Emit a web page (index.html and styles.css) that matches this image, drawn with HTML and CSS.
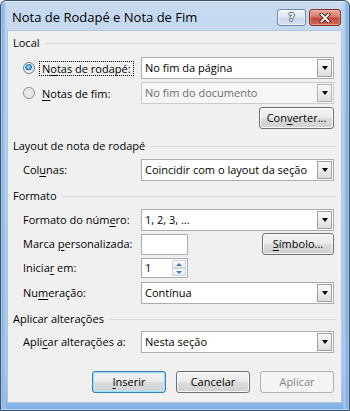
FILE: index.html
```html
<!DOCTYPE html>
<html lang="pt">
<head>
<meta charset="utf-8">
<title>Nota de Rodapé e Nota de Fim</title>
<link rel="stylesheet" href="styles.css">
</head>
<body>
<div class="window">
  <div class="titlebar">
    <span class="title">Nota de Rodapé e Nota de Fim</span>
    <div class="caption-buttons">
      <div class="cap-btn help"><span class="help-glyph">?</span></div>
      <div class="cap-btn close">
        <svg class="close-glyph" width="12" height="10" viewBox="0 0 12 10">
          <path d="M2.5 1.5 L9.5 8.5 M9.5 1.5 L2.5 8.5" stroke="#4a1f19" stroke-width="3.6" stroke-linecap="square" fill="none"/>
          <path d="M2.5 1.5 L9.5 8.5 M9.5 1.5 L2.5 8.5" stroke="#ffffff" stroke-width="1.9" stroke-linecap="square" fill="none"/>
        </svg>
      </div>
    </div>
  </div>
  <div class="client">
    <div class="group group-local">
      <div class="group-header"><span>Local</span><span class="rule"></span></div>
      <div class="row">
        <div class="radio-label"><span class="radio checked"></span><span class="radio-text focused">N<u>o</u>tas de rodapé:</span></div>
        <div class="combo"><span class="combo-text">No fim da página</span><span class="combo-btn"><span class="arrow"></span></span></div>
      </div>
      <div class="row">
        <div class="radio-label"><span class="radio"></span><span class="radio-text"><u>N</u>otas de fim:</span></div>
        <div class="combo disabled"><span class="combo-text">No fim do documento</span><span class="combo-btn"><span class="arrow"></span></span></div>
      </div>
      <div class="row-buttons">
        <div class="btn btn-convert">Con<u>v</u>erter...</div>
      </div>
    </div>

    <div class="group group-layout">
      <div class="group-header"><span>Layout de nota de rodapé</span><span class="rule"></span></div>
      <div class="row">
        <span class="label">Col<u>u</u>nas:</span>
        <div class="combo"><span class="combo-text">Coincidir com o layout da seção</span><span class="combo-btn"><span class="arrow"></span></span></div>
      </div>
    </div>

    <div class="group group-format">
      <div class="group-header"><span>Formato</span><span class="rule"></span></div>
      <div class="row">
        <span class="label">Formato do núm<u>e</u>ro:</span>
        <div class="combo"><span class="combo-text">1, 2, 3, ...</span><span class="combo-btn"><span class="arrow"></span></span></div>
      </div>
      <div class="row row-mark">
        <span class="label">Marca <u>p</u>ersonalizada:</span>
        <div class="textbox"></div>
        <div class="btn btn-symbol"><u>S</u>ímbolo...</div>
      </div>
      <div class="row row-start">
        <span class="label">Inicia<u>r</u> em:</span>
        <div class="spin">
          <span class="spin-text">1</span>
          <span class="spin-btns">
            <span class="spin-btn"><span class="spin-up"></span></span>
            <span class="spin-btn"><span class="spin-down"></span></span>
          </span>
        </div>
      </div>
      <div class="row row-numbering">
        <span class="label">Nu<u>m</u>eração:</span>
        <div class="combo"><span class="combo-text">Contínua</span><span class="combo-btn"><span class="arrow"></span></span></div>
      </div>
    </div>

    <div class="group group-apply">
      <div class="group-header"><span>Aplicar alterações</span><span class="rule"></span></div>
      <div class="row">
        <span class="label">Apli<u>c</u>ar alterações a:</span>
        <div class="combo"><span class="combo-text">Nesta seção</span><span class="combo-btn"><span class="arrow"></span></span></div>
      </div>
    </div>

    <div class="footer">
      <div class="btn btn-default"><u>I</u>nserir</div>
      <div class="btn">Cancelar</div>
      <div class="btn btn-disabled">Aplicar</div>
    </div>
  </div>
</div>
</body>
</html>
```

FILE: styles.css
```css
* { box-sizing: border-box; }

html, body {
  margin: 0;
  padding: 0;
}

body {
  width: 350px;
  height: 411px;
  overflow: hidden;
  background: #ffffff;
  font-family: "Open Sans", "Noto Sans", sans-serif;
  font-size: 11px;
  color: #000000;
}

u { text-decoration: underline; text-underline-offset: 2px; text-decoration-thickness: 1px; }

.window {
  width: 350px;
  height: 411px;
  border: 1px solid #3f5268;
  border-radius: 6px 6px 0 0;
  padding: 0 7px 7px 6px;
  display: flex;
  flex-direction: column;
  background:
    linear-gradient(90deg, #5f9ce0 0, #9fc4ec 3px, rgba(190,213,238,0) 6px, rgba(190,213,238,0) calc(100% - 7px), #a8c8eb calc(100% - 4px), #5a98dc 100%),
    linear-gradient(180deg, #c6daf1 0, #bdd4ee 40%, #a7c8ec 90%, #7fb0e4 100%);
  box-shadow: inset 0 0 0 1px rgba(255,255,255,0.45);
}

.titlebar {
  height: 29px;
  display: flex;
  justify-content: space-between;
  align-items: flex-start;
}

.title {
  margin: 7px 0 0 5px;
  font-size: 13px;
  line-height: 18px;
  color: #000000;
}

.caption-buttons {
  display: flex;
  gap: 3px;
  margin-top: 8px;
  margin-right: 1px;
}

.cap-btn {
  height: 17px;
  border-radius: 3px;
  display: flex;
  align-items: center;
  justify-content: center;
}

.help {
  width: 29px;
  border: 1px solid #7088a6;
  background: linear-gradient(180deg, #f0f5fb 0, #dce7f4 48%, #c8d8ec 52%, #d3e0f0 100%);
  box-shadow: inset 0 0 0 1px rgba(255,255,255,0.6);
}

.help-glyph {
  font-family: "DejaVu Sans", sans-serif;
  font-weight: bold;
  font-size: 11px;
  line-height: 12px;
  color: #f4f7fb;
  text-shadow: 1px 0 0 #56677c, -1px 0 0 #56677c, 0 1px 0 #56677c, 0 -1px 0 #56677c;
}

.close {
  width: 32px;
  border: 1px solid #80352b;
  background: linear-gradient(180deg, #e9a89b 0, #d87a68 45%, #c3493a 55%, #d06a55 100%);
  box-shadow: inset 0 0 0 1px rgba(255,200,190,0.45);
}

.close-glyph { display: block; }

.client {
  flex: 1;
  background: #f0f0f0;
  border: 1px solid #b3c5da;
  display: flex;
  flex-direction: column;
}

.group {
  display: flex;
  flex-direction: column;
  gap: 3px;
}

.group-local { margin-top: 4px; }
.group-layout { margin-top: 9px; }
.group-format { margin-top: 7px; gap: 2px; }
.group-apply { margin-top: 7px; }

.group-header {
  display: flex;
  align-items: center;
  gap: 5px;
  height: 16px;
  line-height: 16px;
  padding: 0 5px 0 5px;
  margin-bottom: 3px;
}

.group-format .group-header { margin-bottom: 3px; }
.group-layout .group-header { margin-bottom: 2px; }
.group-apply .group-header { margin-bottom: 1px; }

.rule {
  flex: 1;
  height: 1px;
  background: #dadada;
  margin-top: 1px;
}

.row {
  display: grid;
  grid-template-columns: 118px 1fr;
  align-items: center;
  height: 22px;
  padding: 0 7px 0 15px;
}

.row-mark {
  grid-template-columns: 118px 47px 1fr;
}

.row-start {
  grid-template-columns: 118px 1fr;
}

.row-numbering { margin-top: 1px; }

.label {
  line-height: 16px;
  white-space: nowrap;
}

.radio-label {
  display: flex;
  align-items: center;
  gap: 4px;
}

.radio {
  width: 12px;
  height: 12px;
  border-radius: 50%;
  border: 1px solid #8a8a8a;
  background: radial-gradient(circle at 50% 50%, #f4f4f4 0, #dedede 60%, #cfcfcf 100%);
  box-shadow: inset 0 0 0 1px #f8f8f8;
  flex: none;
}

.radio.checked {
  border-color: #6e7e8e;
  background:
    radial-gradient(circle at 45% 40%, #bfe6ff 0, #3c9be0 28%, #1a5f9e 40%, rgba(0,0,0,0) 42%),
    radial-gradient(circle at 50% 50%, #f4f4f4 0, #dedede 60%, #cfcfcf 100%);
}

.radio-text {
  border: 1px solid transparent;
  padding: 0 2px;
  line-height: 13px;
  white-space: nowrap;
}

.radio-text.focused {
  border: 1px dotted #000000;
}

.combo {
  height: 22px;
  border: 1px solid #abadb3;
  background: #ffffff;
  display: flex;
  align-items: stretch;
}

.combo-text {
  flex: 1;
  padding-left: 3px;
  line-height: 20px;
  white-space: nowrap;
  overflow: hidden;
}

.combo-btn {
  width: 15px;
  margin: 1px;
  border: 1px solid #a0a0a0;
  background: linear-gradient(180deg, #f7f7f7 0, #ececec 50%, #dcdcdc 100%);
  display: flex;
  align-items: center;
  justify-content: center;
}

.arrow {
  width: 0;
  height: 0;
  border-left: 3.5px solid transparent;
  border-right: 3.5px solid transparent;
  border-top: 4px solid #000000;
}

.combo.disabled {
  background: #f6f6f6;
  border-color: #cbcbcb;
}

.combo.disabled .combo-text { color: #6d6d6d; }
.combo.disabled .combo-btn { border-color: #b4b4b4; }

.textbox {
  height: 21px;
  border: 1px solid #abadb3;
  background: #ffffff;
}

.row-mark .btn-symbol {
  justify-self: end;
}

.spin {
  width: 47px;
  height: 20px;
  border: 1px solid #abadb3;
  background: #ffffff;
  display: flex;
  align-items: stretch;
}

.spin-text {
  flex: 1;
  padding-left: 3px;
  line-height: 18px;
}

.spin-btns {
  width: 14px;
  margin: 1px;
  display: flex;
  flex-direction: column;
}

.spin-btn {
  flex: 1;
  border: 1px solid #cdd6e1;
  background: linear-gradient(180deg, #f7f9fc 0, #e4eaf1 100%);
  display: flex;
  align-items: center;
  justify-content: center;
}

.spin-up {
  width: 0;
  height: 0;
  border-left: 3px solid transparent;
  border-right: 3px solid transparent;
  border-bottom: 3px solid #4f7ab0;
}

.spin-down {
  width: 0;
  height: 0;
  border-left: 3px solid transparent;
  border-right: 3px solid transparent;
  border-top: 3px solid #4f7ab0;
}

.row-buttons {
  display: flex;
  justify-content: flex-end;
  padding-right: 7px;
}

.btn {
  width: 74px;
  height: 22px;
  border: 1px solid #707070;
  border-radius: 3px;
  background: linear-gradient(180deg, #f3f3f3 0, #ebebeb 48%, #dddddd 52%, #cfcfcf 100%);
  box-shadow: inset 0 0 0 1px rgba(255,255,255,0.8);
  display: flex;
  align-items: center;
  justify-content: center;
  line-height: 16px;
  white-space: nowrap;
}

.btn-convert { width: 75px; }
.btn-symbol { width: 72px; }

.btn-default {
  border-color: #3c7fb1;
  box-shadow: inset 0 0 0 1px #9fdcf5, inset 0 0 0 2px rgba(190,235,252,0.6);
}

.btn-disabled {
  border-color: #adb2b5;
  background: #f4f4f4;
  box-shadow: none;
  color: #838383;
}

.footer {
  display: flex;
  justify-content: flex-end;
  gap: 10px;
  padding-right: 7px;
  margin-top: 18px;
}
```
